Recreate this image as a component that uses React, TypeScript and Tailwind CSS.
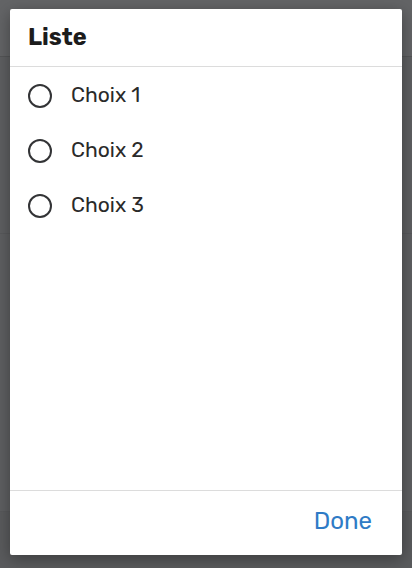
import React, { useState } from "react";

const CHOICES = ["Choix 1", "Choix 2", "Choix 3"];

export default function App() {
  const [value, setValue] = useState<string | null>(null);

  return (
    <div
      className="relative w-[412px] h-[568px] overflow-hidden bg-[#5e5f61]"
      style={{ fontFamily: "Rubik, 'Noto Sans', 'Open Sans', sans-serif" }}
    >
      {/* dimmed page behind the dialog */}
      <div className="absolute inset-0 flex flex-col">
        <div className="h-[57px] border-b border-[#545557] bg-[#636466]" />
        <div className="h-[177px] border-b border-[#58595b]" />
        <div className="h-[278px] border-b border-[#58595b]" />
        <div className="flex-1 bg-[#5a5b5d]" />
      </div>

      {/* Dialog */}
      <div className="absolute left-[10px] top-[9px] w-[392px] h-[546px] bg-white rounded-[2px] shadow-[0_4px_16px_rgba(0,0,0,0.35)] flex flex-col">
        <div className="h-[58px] flex items-center px-[18px] border-b border-[#dcdcdc]">
          <h1 className="text-[23.5px] font-bold text-[#1c1c1c] mt-[1px]">Liste</h1>
        </div>

        <div className="flex-1 pt-[1px]">
          {CHOICES.map((c) => (
            <button
              key={c}
              onClick={() => setValue(c)}
              className="w-full h-[55px] flex items-center pl-[17px] text-left"
            >
              <svg width="26" height="26" viewBox="0 0 26 26" className="shrink-0">
                <circle cx="13" cy="13" r="11" fill="none" stroke="#333436" strokeWidth="2" />
                {value === c && <circle cx="13" cy="13" r="6" fill="#333436" />}
              </svg>
              <span className="ml-[18px] text-[21px] text-[#2a2a2a] -mt-[1px]">{c}</span>
            </button>
          ))}
        </div>

        <div className="h-[65px] border-t border-[#dcdcdc] flex items-center justify-end pr-[30px]">
          <button className="text-[24px] text-[#2f7bc6] -mt-[4px]">Done</button>
        </div>
      </div>
    </div>
  );
}
